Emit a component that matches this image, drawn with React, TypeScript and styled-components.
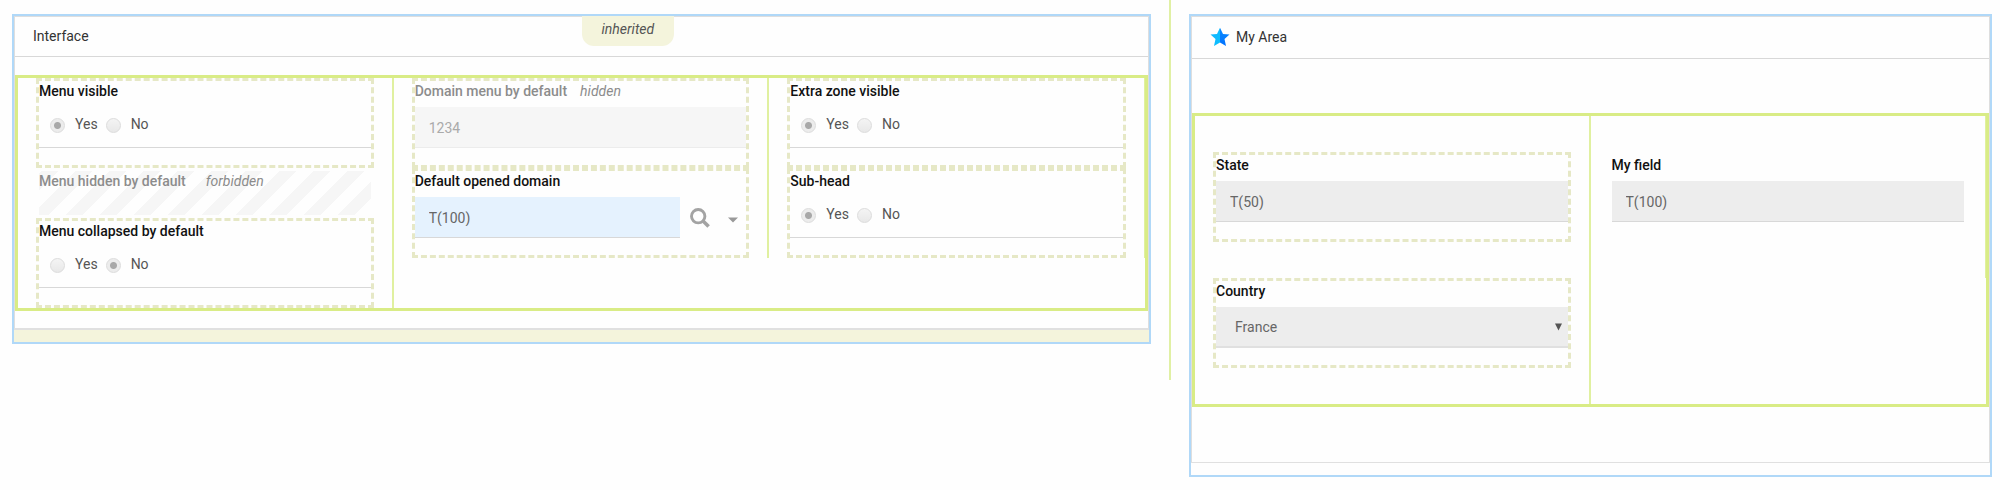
import React, { useId, useState } from "react";
import styled, { createGlobalStyle, css } from "styled-components";

const GlobalStyle = createGlobalStyle`
  *, *::before, *::after { box-sizing: border-box; }
  body {
    margin: 0;
    background: #fefefe;
    color: #333;
    font-family: Roboto, "Liberation Sans", sans-serif;
    font-size: 14px;
    line-height: 20px;
  }
`;

const Page = styled.div`
  display: grid;
  grid-template-columns: 1171fr 829fr;
  align-items: start;
`;

const MainArea = styled.main`
  min-height: 380px;
  padding: 14px 18px 0 12px;
  border-right: 2px solid #e0f0a4;
`;

const SideArea = styled.aside`
  padding: 14px 8px 0 18px;
`;

const Panel = styled.section`
  position: relative;
  border: 2px solid #b0d8f8;
`;

const PanelInner = styled.div`
  border: 1px solid #dedede;
  border-bottom: 0;
`;

const PanelHeader = styled.header<{ $tall?: boolean }>`
  display: flex;
  align-items: center;
  gap: 6px;
  height: ${(p) => (p.$tall ? 42 : 40)}px;
  padding: 0 18px 2px;
  border-bottom: 1px solid #d8d8d8;
`;

const PanelTitle = styled.h2`
  margin: 0;
  font-size: 14px;
  font-weight: 400;
`;

const InheritedBadge = styled.span`
  position: absolute;
  top: 0;
  left: 50%;
  padding: 3px 20px 7px;
  border-radius: 0 0 12px 12px;
  background: #f4f4dc;
  color: #555;
  font-style: italic;
`;

const PanelBody = styled.div<{ $roomy?: boolean }>`
  padding: ${(p) => (p.$roomy ? "54px 0 55px" : "18px 0 17px")};
`;

const PanelFooter = styled.footer<{ $inherited?: boolean }>`
  height: ${(p) => (p.$inherited ? 14 : 13)}px;
  border-top: ${(p) => (p.$inherited ? 2 : 1)}px solid #e0e0e0;
  background: ${(p) => (p.$inherited ? "#f4f4dc" : "transparent")};
`;

const Columns = styled.div<{ $count: number }>`
  display: grid;
  grid-template-columns: repeat(${(p) => p.$count}, 1fr);
  align-items: start;
  border: 3px solid #d9ec86;
`;

const Column = styled.div<{ $roomy?: boolean }>`
  display: flex;
  flex-direction: column;
  gap: ${(p) => (p.$roomy ? 36 : 0)}px;
  padding: ${(p) => (p.$roomy ? 36 : 0)}px 18px;
  border-right: 2px solid #e0f0a0;
  &:last-child { border-right-width: 1px; }
`;

type FieldState = "inherited" | "hidden" | "forbidden" | "plain";

const FieldBox = styled.div<{ $state: FieldState }>`
  min-height: ${(p) => (p.$state === "forbidden" ? 50 : 90)}px;
  border: 3px dashed #e6e8c6;
  ${(p) =>
    (p.$state === "plain" || p.$state === "forbidden") &&
    css`
      border-color: transparent;
    `}
  ${(p) =>
    p.$state === "forbidden" &&
    css`
      background: repeating-linear-gradient(-45deg, #fefefe 0 12px, #f6f6f6 12px 24px) padding-box;
    `}
`;

const FieldHead = styled.div<{ $gap: number }>`
  display: flex;
  gap: ${(p) => p.$gap}px;
  padding-bottom: 6px;
`;

const FieldLabel = styled.label<{ $muted: boolean }>`
  color: ${(p) => (p.$muted ? "#8c8c8c" : "#111")};
  font-weight: 500;
`;

const StateNote = styled.em`
  color: #8c8c8c;
`;

const TextBox = styled.input<{ $tone: "grey" | "faded" | "blue" }>`
  display: block;
  flex: 1;
  width: 100%;
  min-width: 0;
  height: 41px;
  padding: 1px 14px 0;
  border: 0;
  border-bottom: 1px solid ${(p) => (p.$tone === "faded" ? "#ececec" : "#d8d8d8")};
  border-radius: 0;
  outline: 0;
  background: ${(p) => ({ grey: "#ededed", faded: "#f6f6f6", blue: "#e5f2fe" })[p.$tone]};
  color: ${(p) => (p.$tone === "faded" ? "#aaa" : "#666")};
  font: inherit;
`;

const LookupRow = styled.div`
  display: flex;
  align-items: center;
`;

const IconButton = styled.button`
  display: flex;
  align-items: center;
  justify-content: center;
  width: 39px;
  height: 38px;
  padding: 0;
  border: 0;
  background: none;
`;

const CaretButton = styled(IconButton)`
  width: 27px;
  padding-top: 4px;
`;

const RadioRow = styled.div`
  display: flex;
  align-items: center;
  gap: 8px;
  height: 41px;
  padding: 0 11px 6px;
  border-bottom: 1px solid #d8d8d8;
`;

const RadioLabel = styled.label`
  display: flex;
  align-items: center;
  gap: 10px;
  color: #555;
`;

const Radio = styled.input`
  appearance: none;
  width: 15px;
  height: 15px;
  margin: 2px 0 0;
  border: 1px solid #dcdcdc;
  border-radius: 50%;
  background: linear-gradient(#f4f4f4, #e8e8e8);
  &:checked {
    background: radial-gradient(circle, #a8a8a8 0 3px, #ececec 4px);
  }
`;

const SelectWrap = styled.div`
  position: relative;
`;

const Select = styled.select`
  appearance: none;
  display: block;
  width: 100%;
  height: 41px;
  padding: 1px 28px 0 19px;
  border: 0;
  border-bottom: 2px solid #e0e0e0;
  border-radius: 0;
  outline: 0;
  background: #ededed;
  color: #666;
  font: inherit;
`;

const SelectArrow = styled.svg`
  position: absolute;
  top: 16px;
  right: 6px;
  pointer-events: none;
`;

const SearchIcon = () => (
  <svg width="20" height="20" viewBox="0 0 20 20" fill="none" stroke="#a3a3a3" aria-hidden="true">
    <circle cx="8.2" cy="8.2" r="6.7" strokeWidth="2.9" />
    <path d="M12.8 12.8 18.6 18.6" strokeWidth="3.6" />
  </svg>
);

const StarIcon = () => (
  <svg width="20" height="20" viewBox="0 0 20 20" aria-hidden="true">
    <defs>
      <linearGradient id="starLight" x1="0" y1="0" x2="1" y2="1">
        <stop offset="0" stopColor="#12b4ff" />
        <stop offset="1" stopColor="#0cc0ff" />
      </linearGradient>
      <linearGradient id="starDark" x1="0" y1="0" x2="0" y2="1">
        <stop offset="0" stopColor="#0a8cff" />
        <stop offset="1" stopColor="#0070ff" />
      </linearGradient>
    </defs>
    <path d="M10 .8 7 7 .5 7.4 5.5 12 4 19 10 15.4Z" fill="url(#starLight)" />
    <path d="M10 .8 13 7 19.5 7.4 14.5 12 16 19 10 15.4Z" fill="url(#starDark)" />
  </svg>
);

interface FieldProps {
  label: string;
  id?: string;
  labelId?: string;
  state?: FieldState;
  children?: React.ReactNode;
}

function Field({ label, id, labelId, state = "inherited", children }: FieldProps) {
  const muted = state === "hidden" || state === "forbidden";
  return (
    <FieldBox $state={state}>
      <FieldHead $gap={state === "forbidden" ? 20 : 13}>
        <FieldLabel as={id ? "label" : "span"} htmlFor={id} id={labelId} $muted={muted}>
          {label}
        </FieldLabel>
        {muted && <StateNote>{state}</StateNote>}
      </FieldHead>
      {children}
    </FieldBox>
  );
}

function YesNoField({ label, initial }: { label: string; initial: "Yes" | "No" }) {
  const name = useId();
  const [value, setValue] = useState<string>(initial);
  return (
    <Field label={label} labelId={`${name}-label`}>
      <RadioRow role="radiogroup" aria-labelledby={`${name}-label`}>
        {["Yes", "No"].map((option) => (
          <RadioLabel key={option}>
            <Radio
              type="radio"
              name={name}
              checked={value === option}
              onChange={() => setValue(option)}
            />
            {option}
          </RadioLabel>
        ))}
      </RadioRow>
    </Field>
  );
}

export default function App() {
  return (
    <>
      <GlobalStyle />
      <Page>
        <MainArea>
          <Panel>
            <PanelInner>
              <PanelHeader>
                <PanelTitle>Interface</PanelTitle>
              </PanelHeader>
              <PanelBody>
                <Columns $count={3}>
                  <Column>
                    <YesNoField label="Menu visible" initial="Yes" />
                    <Field label="Menu hidden by default" state="forbidden" />
                    <YesNoField label="Menu collapsed by default" initial="No" />
                  </Column>
                  <Column>
                    <Field label="Domain menu by default" id="domain-menu" state="hidden">
                      <TextBox id="domain-menu" $tone="faded" defaultValue="1234" />
                    </Field>
                    <Field label="Default opened domain" id="opened-domain">
                      <LookupRow>
                        <TextBox id="opened-domain" $tone="blue" defaultValue="T(100)" />
                        <IconButton type="button" aria-label="Search domain">
                          <SearchIcon />
                        </IconButton>
                        <CaretButton type="button" aria-label="More actions">
                          <svg width="10" height="6" viewBox="0 0 10 6" fill="#999" aria-hidden="true">
                            <path d="M0 .5H10L5 5.5Z" />
                          </svg>
                        </CaretButton>
                      </LookupRow>
                    </Field>
                  </Column>
                  <Column>
                    <YesNoField label="Extra zone visible" initial="Yes" />
                    <YesNoField label="Sub-head" initial="Yes" />
                  </Column>
                </Columns>
              </PanelBody>
            </PanelInner>
            <PanelFooter $inherited />
            <InheritedBadge>inherited</InheritedBadge>
          </Panel>
        </MainArea>
        <SideArea>
          <Panel>
            <PanelInner>
              <PanelHeader $tall>
                <StarIcon />
                <PanelTitle>My Area</PanelTitle>
              </PanelHeader>
              <PanelBody $roomy>
                <Columns $count={2}>
                  <Column $roomy>
                    <Field label="State" id="state">
                      <TextBox id="state" $tone="grey" defaultValue="T(50)" />
                    </Field>
                    <Field label="Country" id="country">
                      <SelectWrap>
                        <Select id="country" defaultValue="France">
                          <option>France</option>
                        </Select>
                        <SelectArrow width="7" height="8" viewBox="0 0 7 8" fill="#555" aria-hidden="true">
                          <path d="M0 .5H7L3.5 7.5Z" />
                        </SelectArrow>
                      </SelectWrap>
                    </Field>
                  </Column>
                  <Column $roomy>
                    <Field label="My field" id="my-field" state="plain">
                      <TextBox id="my-field" $tone="grey" defaultValue="T(100)" />
                    </Field>
                  </Column>
                </Columns>
              </PanelBody>
            </PanelInner>
            <PanelFooter />
          </Panel>
        </SideArea>
      </Page>
    </>
  );
}
